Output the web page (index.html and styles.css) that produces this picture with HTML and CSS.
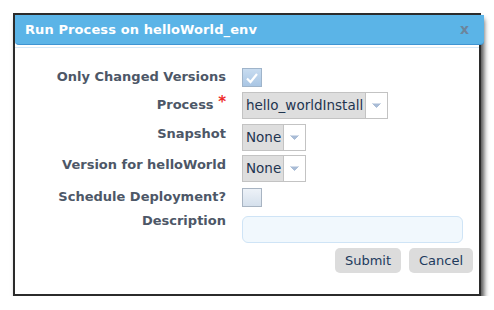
FILE: index.html
```html
<!DOCTYPE html>
<html>
<head>
<meta charset="utf-8">
<link rel="stylesheet" href="styles.css">
</head>
<body>
<div class="dialog">
  <div class="header">
    <span class="title">Run Process on helloWorld_env</span>
    <span class="close">x</span>
  </div>
  <div class="rule"></div>
  <div class="form">
    <div class="row r1">
      <div class="label">Only Changed Versions</div>
      <div class="ctl"><span class="check checked"><svg width="14" height="12" viewBox="0 0 14 12"><path d="M2 6.5 L5.5 10 L12 2" fill="none" stroke="#fff" stroke-width="2.2"/></svg></span></div>
    </div>
    <div class="row r2">
      <div class="label">Process <span class="req">*</span></div>
      <div class="ctl"><span class="select"><span class="val">hello_worldInstall</span><span class="arrow"><svg width="9" height="5" viewBox="0 0 9 5"><path d="M0.5 0.5 L4.5 4.5 L8.5 0.5" fill="#a9bcd6" stroke="#a9bcd6" stroke-width="1"/></svg></span></span></div>
    </div>
    <div class="row r3">
      <div class="label">Snapshot</div>
      <div class="ctl"><span class="select"><span class="val">None</span><span class="arrow"><svg width="9" height="5" viewBox="0 0 9 5"><path d="M0.5 0.5 L4.5 4.5 L8.5 0.5" fill="#a9bcd6" stroke="#a9bcd6" stroke-width="1"/></svg></span></span></div>
    </div>
    <div class="row r4">
      <div class="label">Version for helloWorld</div>
      <div class="ctl"><span class="select"><span class="val">None</span><span class="arrow"><svg width="9" height="5" viewBox="0 0 9 5"><path d="M0.5 0.5 L4.5 4.5 L8.5 0.5" fill="#a9bcd6" stroke="#a9bcd6" stroke-width="1"/></svg></span></span></div>
    </div>
    <div class="row r5">
      <div class="label">Schedule Deployment?</div>
      <div class="ctl"><span class="check"></span></div>
    </div>
    <div class="row r6">
      <div class="label">Description</div>
      <div class="ctl"><span class="textarea"></span></div>
    </div>
    <div class="buttons">
      <span class="btn submit">Submit</span>
      <span class="btn cancel">Cancel</span>
    </div>
  </div>
</div>
</body>
</html>
```
FILE: styles.css
```css
html, body {
  margin: 0;
  padding: 0;
  background: #ffffff;
}
body {
  padding: 13px 0 0 13px;
  font-family: "DejaVu Sans", Verdana, sans-serif;
}
.dialog {
  width: 464px;
  height: 279px;
  border: 2px solid #2b2b2b;
  background: #fff;
  box-shadow: 3px 6px 5px rgba(0, 0, 0, 0.7);
}
.header {
  height: 29px;
  margin-right: -5px;
  background: #5bb4e7;
  border-bottom: 1px solid #3f94d2;
  border-radius: 0 0 4px 4px;
  display: flex;
  align-items: center;
  justify-content: space-between;
  padding: 0 15px 0 10px;
}
.title {
  color: #ffffff;
  font-weight: bold;
  font-size: 13px;
  letter-spacing: 0.1px;
}
.close {
  color: #6d859c;
  font-weight: bold;
  font-size: 14px;
  margin-top: -2px;
}
.rule {
  height: 1px;
  margin-top: 2px;
  background: #d7e9f7;
}
.form {
  padding-top: 20px;
}
.row {
  display: flex;
  align-items: flex-start;
}
.label {
  width: 211px;
  text-align: right;
  font-size: 13px;
  font-weight: bold;
  color: #4d5767;
  line-height: 16px;
  white-space: nowrap;
}
.req {
  color: #ee2a2a;
  font-size: 15px;
  vertical-align: top;
  position: relative;
  top: -3px;
}
.ctl {
  margin-left: 16px;
  display: flex;
}
.r1 { height: 24px; }
.r1 .label { padding-top: 1px; }
.r2 { height: 32px; }
.r2 .label { padding-top: 5px; }
.r3 { height: 31px; }
.r3 .label { padding-top: 2px; }
.r4 { height: 33px; }
.r4 .label { padding-top: 2px; }
.r5 { height: 28px; }
.r5 .label { padding-top: 1px; }
.r6 { height: 32px; }
.r6 .label { padding-top: 0; margin-top: -3px; }
.check {
  width: 18px;
  height: 17px;
  border: 1px solid #a8b4c2;
  background: linear-gradient(#edf2f8, #d5e0ec);
  display: flex;
  align-items: center;
  justify-content: center;
}
.check.checked {
  background: linear-gradient(#c8dcf0, #a9c6e4);
  border-color: #9fb4ca;
}
.select {
  display: flex;
  height: 25px;
  border: 1px solid #c3c3c3;
}
.val {
  background: #dedede;
  border-right: 1px solid #c3c3c3;
  padding: 0 2px 0 3px;
  font-size: 13.5px;
  color: #1f3550;
  line-height: 25px;
}
.arrow {
  width: 21px;
  background: #fff;
  display: flex;
  align-items: center;
  justify-content: center;
}
.textarea {
  width: 219px;
  height: 25px;
  border: 1px solid #cfe4f6;
  border-radius: 6px;
  background: #f1f8fd;
}
.buttons {
  display: flex;
  justify-content: flex-end;
  gap: 8px;
  padding-right: 6px;
  margin-top: 0;
}
.btn {
  height: 25px;
  line-height: 25px;
  background: #dcdcdc;
  border-radius: 5px;
  font-size: 13px;
  color: #213a5c;
  text-align: center;
}
.submit { width: 66px; }
.cancel { width: 64px; }
```
